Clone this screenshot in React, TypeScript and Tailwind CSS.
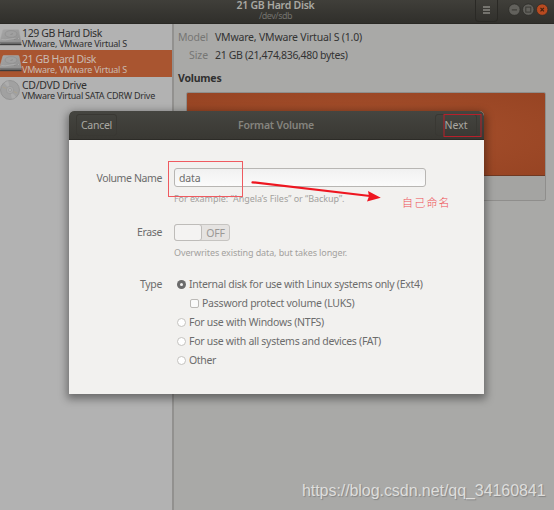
import React, { useLayoutEffect, useRef, useState } from "react";

/* A single line of text whose tracking is adjusted to span a given width. */
function Line({ w, children, className = "" }: { w: number; children: string; className?: string }) {
  const ref = useRef<HTMLSpanElement>(null);
  const [spacing, setSpacing] = useState(0);
  useLayoutEffect(() => {
    if (ref.current) setSpacing((w - ref.current.getBoundingClientRect().width) / children.length);
  }, []);
  return (
    <span ref={ref} className={"inline-block whitespace-nowrap " + className} style={{ letterSpacing: spacing + "px" }}>
      {children}
    </span>
  );
}

function DiskIcon() {
  return (
    <svg width="23" height="22" viewBox="0 -3 23 22" className="shrink-0">
      <defs>
        <linearGradient id="diskTop" x1="0" y1="0" x2="1" y2="1">
          <stop offset="0" stopColor="#a6a6a6" />
          <stop offset="1" stopColor="#909090" />
        </linearGradient>
      </defs>
      <path d="M2 10L0 16h21.400L19 8z" fill="#4b4b4b" />
      <path d="M3.800 .5h14.200q.8 0 1 .8l2.300 11.700H-.5L2.800 1.300Q3 .5 3.800 .5z" fill="url(#diskTop)" stroke="#a8a8a8" strokeWidth=".5" />
      <path d="M1.500 10.500C6 12 12 8.500 19 9.500" fill="none" stroke="#b0b0b0" strokeWidth=".8" />
      <ellipse cx="11" cy="5" rx="6" ry="3.400" fill="#a0a0a0" stroke="#8b8b8b" strokeWidth=".6" />
      <path d="M14 10.500l4-1.200M10.500 5.500l2.500-.8" stroke="#7d7d7d" strokeWidth=".6" />
      <path d="M-.5 12.800h21.800v1.900H-.5z" fill="#777" />
      <path d="M0 15.700h21.500" stroke="#3b3b3b" strokeWidth="1" />
    </svg>
  );
}

function DiscIcon() {
  return (
    <svg width="23" height="22" viewBox="0 0 23 22" className="shrink-0">
      <circle cx="10" cy="11" r="9.500" fill="#a1a1a1" stroke="#8b8b8b" strokeWidth=".7" />
      <path d="M10 11L4.300 4A9 9 0 0 1 8.300 2.100zM10 11l6 7A9 9 0 0 1 11.800 19.800z" fill="#adadad" />
      <path d="M10 11L2.800 8M10 11l7.200 3" stroke="#aaa28f" strokeWidth="1" />
      <circle cx="10" cy="11" r="3.700" fill="#a9a9a9" stroke="#979797" strokeWidth=".7" />
      <circle cx="10" cy="11" r="1.500" fill="#b5b5b5" stroke="#8b8b8b" strokeWidth=".5" />
    </svg>
  );
}

function WindowButtons() {
  return (
    <svg width="46" height="20" viewBox="0 0 46 20">
      <g stroke="#2a2925" strokeWidth=".7">
        <circle cx="6.400" cy="9.600" r="5.700" fill="#62615c" />
        <circle cx="20.300" cy="9.600" r="5.700" fill="#62615c" />
        <circle cx="34.200" cy="9.600" r="5.700" fill="#b84a20" />
      </g>
      <path d="M3.800 9.900h5.200" stroke="#3b3a35" strokeWidth="1.100" />
      <rect x="17.800" y="7.100" width="5" height="5" fill="none" stroke="#3b3a35" strokeWidth="1" />
      <path d="M32.500 7.900l3.400 3.400m0-3.400l-3.400 3.400" stroke="#40200f" strokeWidth="1.200" />
    </svg>
  );
}

type DriveProps = { icon: React.ReactNode; name: string; nameWidth: number; detail: string; detailWidth: number; selected?: boolean };

function Drive({ icon, name, nameWidth, detail, detailWidth, selected }: DriveProps) {
  return (
    <div className={"flex h-[26.300px] items-center " + (selected ? "bg-[#a95530] text-[#c9bbb2]" : "text-[#2f2f2f]")}>
      {icon}
      <div className="-ml-px flex flex-col items-start pt-px">
        <Line w={nameWidth} className="text-[10.500px] leading-[12px]">{name}</Line>
        <Line w={detailWidth} className="text-[9px] leading-[10px]">{detail}</Line>
      </div>
    </div>
  );
}

function Radio({ checked = false }: { checked?: boolean }) {
  return checked ? (
    <span className="flex size-[9px] items-center justify-center rounded-full bg-[#6b6b6b]">
      <span className="size-[3px] rounded-full bg-[#f2f1f0]" />
    </span>
  ) : (
    <span className="size-[9px] rounded-full border border-[#c4c2bf] bg-white" />
  );
}

function Dialog() {
  return (
    <section className="absolute left-[69px] top-[111px] flex h-[283px] w-[415px] flex-col overflow-hidden rounded-t-[5px] bg-[#f2f1ef] text-[10.500px] text-[#6c6c6c] shadow-[0_3px_9px_2px_rgba(0,0,0,0.4)]">
      <header className="flex h-[29px] shrink-0 items-center justify-between border-b border-[#2c2b27] bg-linear-to-b from-[#454540] to-[#393833] px-[7px] text-[#aaa9a3]">
        <span className="flex h-[22px] w-[41px] items-center justify-center rounded-[3px] border border-[#393833] pt-px"><Line w={31}>Cancel</Line></span>
        <Line w={76} className="pt-px font-semibold text-[#85847e]">Format Volume</Line>
        <span className="flex h-[22px] w-[42px] items-center justify-center rounded-[3px] border border-[#393833] pt-px"><Line w={23}>Next</Line></span>
      </header>
      <div className="grid grid-cols-[93px_1fr] gap-x-3 pt-7">
        <span className="text-right leading-5"><Line w={65.500}>Volume Name</Line></span>
        <div className="flex h-[56px] flex-col items-start">
          <div className="flex h-[19px] w-[252px] items-center rounded-[3px] border border-[#b8b6b3] bg-linear-to-b from-[#f1f1f1] to-[#fbfbfb] pl-1 pt-[2px]"><Line w={21.500}>data</Line></div>
          <Line w={170.500} className="mt-[5px] text-[9px] leading-[14px] text-[#a3a19e]">For example: “Angela’s Files” or “Backup”.</Line>
        </div>
        <span className="text-right leading-[17px]"><Line w={25}>Erase</Line></span>
        <div className="flex h-[51px] flex-col items-start">
          <div className="flex h-[17px] w-[56px] rounded-[3px] border border-[#c6c4c1] bg-[#e5e3e1]">
            <span className="-my-px -ml-px w-[28px] rounded-[3px] border border-[#bebcb9] bg-[#f4f3f2]" />
            <span className="flex-1 text-center leading-[16px] text-[#9b9996]"><Line w={18.500}>OFF</Line></span>
          </div>
          <Line w={173} className="mt-[5px] text-[9px] leading-[14px] text-[#a3a19e]">Overwrites existing data, but takes longer.</Line>
        </div>
        <span className="text-right leading-[19px]"><Line w={22}>Type</Line></span>
        <div className="flex flex-col pl-[3px] leading-[19px]">
          <label className="flex h-[19px] items-center gap-[3px]"><Radio checked /><Line w={233.500}>Internal disk for use with Linux systems only (Ext4)</Line></label>
          <label className="flex h-[19px] items-center gap-[3px] pl-[13px]"><span className="size-[9px] rounded-[2px] border border-[#bbb9b6] bg-[#fafafa]" /><Line w={152.500}>Password protect volume (LUKS)</Line></label>
          <label className="flex h-[19px] items-center gap-[3px]"><Radio /><Line w={135}>For use with Windows (NTFS)</Line></label>
          <label className="flex h-[19px] items-center gap-[3px]"><Radio /><Line w={192}>For use with all systems and devices (FAT)</Line></label>
          <label className="flex h-[19px] items-center gap-[3px]"><Radio /><Line w={27}>Other</Line></label>
        </div>
      </div>
    </section>
  );
}

export default function App() {
  return (
    <div className="relative flex h-[510px] w-[554px] flex-col overflow-hidden bg-[#a9a9a7] font-['Noto_Sans',sans-serif]">
      <header className="flex h-6 shrink-0 border-b border-[#292824] bg-linear-to-b from-[#403f3a] to-[#302f2b]">
        <div className="flex w-[475px] shrink-0 flex-col items-center pl-[76px]">
          <Line w={78} className="text-[10.500px] font-semibold leading-[11px] text-[#a9a8a2]">21 GB Hard Disk</Line>
          <Line w={33} className="text-[9px] leading-[10px] text-[#73726d]">/dev/sdb</Line>
        </div>
        <div className="mr-[10px] flex h-[22px] w-[23px] shrink-0 items-center justify-center rounded-b-[4px] border border-t-0 border-[#2a2925]">
          <svg width="9" height="9" viewBox="0 0 9 9"><path d="M1 1h7M1 4h7M1 7h7" stroke="#b1b0aa" strokeWidth="1.200" /></svg>
        </div>
        <WindowButtons />
      </header>
      <main className="flex flex-1">
        <aside className="w-[174px] border-r-2 border-[#92918f] bg-[#b2b2b2]">
          <Drive icon={<DiskIcon />} name="129 GB Hard Disk" nameWidth={80} detail="VMware, VMware Virtual S" detailWidth={105} />
          <Drive icon={<DiskIcon />} name="21 GB Hard Disk" nameWidth={74} detail="VMware, VMware Virtual S" detailWidth={105} selected />
          <Drive icon={<DiscIcon />} name="CD/DVD Drive" nameWidth={64.500} detail="VMware Virtual SATA CDRW Drive" detailWidth={133} />
        </aside>
        <section className="flex-1 pl-1 text-[10.500px] text-[#333]">
          <div className="grid grid-cols-[30px_1fr] gap-x-[7px] pt-[5px] leading-[17.500px]">
            <span className="text-right text-[#767674]"><Line w={30}>Model</Line></span><span><Line w={147}>VMware, VMware Virtual S (1.0)</Line></span>
            <span className="text-right text-[#767674]"><Line w={19}>Size</Line></span><span><Line w={132.500}>21 GB (21,474,836,480 bytes)</Line></span>
          </div>
          <h2 className="mt-[5px] font-bold leading-[18px] text-[#303030]"><Line w={43.500}>Volumes</Line></h2>
          <div className="ml-2 mt-[5px] h-[109px] w-[360px] overflow-hidden rounded-[2px] border border-[#8f8e8c] bg-[#a4a4a2]">
            <div className="h-[83px] border-b border-[#703922] bg-radial from-[#a8512d] to-[#974423]" />
          </div>
        </section>
      </main>
      <Dialog />
      <svg className="pointer-events-none absolute left-0 top-0" width="554" height="510" viewBox="0 0 554 510">
        <rect x="168.500" y="161.500" width="74" height="35" fill="none" stroke="#ef5a60" />
        <rect x="444" y="114.500" width="37" height="22" fill="none" stroke="#b8202b" />
        <path d="M252.500 182.300L370 196" stroke="#ee1620" strokeWidth="2.200" strokeLinecap="round" />
        <path d="M380.800 197.800L367 201.500L369 196.300L368 191z" fill="#ee1620" />
      </svg>
      <span className="absolute left-[402px] top-[195px] whitespace-nowrap font-['Noto_Sans_CJK_SC',sans-serif] text-[11px] font-light leading-[15px] tracking-[1.200px] text-[#ee5055]">自己命名</span>
      <span className="absolute left-[302px] top-[481px] font-['Liberation_Sans',sans-serif] text-[16px] leading-5 text-[#dededc] [text-shadow:1px_1px_1px_#858585]"><Line w={243.500}>https://blog.csdn.net/qq_34160841</Line></span>
    </div>
  );
}
